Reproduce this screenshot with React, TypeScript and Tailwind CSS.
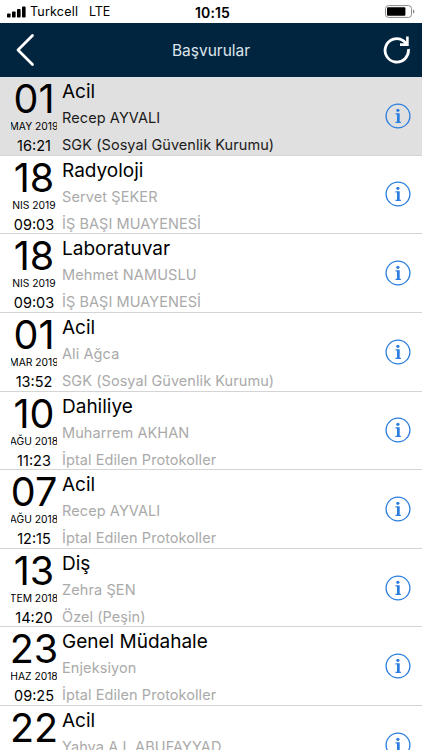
import clsx from "clsx";

interface Application {
  day: string;
  month: string;
  time: string;
  department: string;
  person: string;
  description: string;
  selected?: boolean;
}

const applications: Application[] = [
  {
    day: "01",
    month: "MAY 2019",
    time: "16:21",
    department: "Acil",
    person: "Recep AYVALI",
    description: "SGK (Sosyal Güvenlik Kurumu)",
    selected: true,
  },
  {
    day: "18",
    month: "NIS 2019",
    time: "09:03",
    department: "Radyoloji",
    person: "Servet ŞEKER",
    description: "İŞ BAŞI MUAYENESİ",
  },
  {
    day: "18",
    month: "NIS 2019",
    time: "09:03",
    department: "Laboratuvar",
    person: "Mehmet NAMUSLU",
    description: "İŞ BAŞI MUAYENESİ",
  },
  {
    day: "01",
    month: "MAR 2019",
    time: "13:52",
    department: "Acil",
    person: "Ali Ağca",
    description: "SGK (Sosyal Güvenlik Kurumu)",
  },
  {
    day: "10",
    month: "AĞU 2018",
    time: "11:23",
    department: "Dahiliye",
    person: "Muharrem AKHAN",
    description: "İptal Edilen Protokoller",
  },
  {
    day: "07",
    month: "AĞU 2018",
    time: "12:15",
    department: "Acil",
    person: "Recep AYVALI",
    description: "İptal Edilen Protokoller",
  },
  {
    day: "13",
    month: "TEM 2018",
    time: "14:20",
    department: "Diş",
    person: "Zehra ŞEN",
    description: "Özel (Peşin)",
  },
  {
    day: "23",
    month: "HAZ 2018",
    time: "09:25",
    department: "Genel Müdahale",
    person: "Enjeksiyon",
    description: "İptal Edilen Protokoller",
  },
  {
    day: "22",
    month: "",
    time: "",
    department: "Acil",
    person: "Yahya A.I. ABUFAYYAD",
    description: "",
  },
];

const StatusBar = () => (
  <div className="grid h-[23px] shrink-0 grid-cols-3 items-center px-[7px] pt-0.5 text-black">
    <div className="flex items-center whitespace-nowrap text-[12.5px]">
      <svg
        className="-mt-0.5"
        width="19"
        height="12"
        viewBox="0 0 19 12"
        fill="currentColor"
      >
        <rect x="0" y="7.5" width="3.6" height="4" rx="0.8" />
        <rect x="5" y="5.5" width="3.6" height="6" rx="0.8" />
        <rect x="10" y="3" width="3.6" height="8.5" rx="0.8" />
        <rect x="15" y="0.6" width="3.6" height="10.9" rx="0.8" />
      </svg>
      <span className="ml-1 tracking-[0.2px]">Turkcell</span>
      <span className="ml-[11px] tracking-[-0.2px]">LTE</span>
    </div>
    <div className="pl-[3px] text-center text-[14px] font-semibold tracking-[0.1px]">
      10:15
    </div>
    <svg
      className="-mt-0.5 justify-self-end"
      width="30"
      height="13"
      viewBox="0 0 30 13"
      fill="none"
    >
      <rect x="0.5" y="0.6" width="26" height="11.8" rx="3" stroke="#8a8a8a" />
      <rect x="2" y="2.2" width="18.4" height="8.6" rx="1" fill="#000" />
      <path d="M28 4.5v4c1-.3 1.4-1.1 1.4-2s-.4-1.7-1.4-2z" fill="#8a8a8a" />
    </svg>
  </div>
);

const Header = () => (
  <header className="flex h-[54px] shrink-0 items-center justify-between bg-[#02253f] pl-[15px] pr-[11px] text-white">
    <button aria-label="Geri">
      <svg width="20" height="34" viewBox="0 0 20 34" fill="none">
        <path
          d="M17.5 2.5 3 17l14.5 14.5"
          stroke="currentColor"
          strokeWidth="2.8"
          strokeLinecap="round"
          strokeLinejoin="round"
        />
      </svg>
    </button>
    <h1 className="pl-1 pt-px text-[15.5px] text-[#dde5ec]">Başvurular</h1>
    <button aria-label="Yenile">
      <svg width="28" height="28" viewBox="0 0 28 28" fill="none">
        <path
          d="M25.4 13A11.7 11.7 0 1 1 20.5 4.8L24 8.4"
          stroke="currentColor"
          strokeWidth="2.8"
        />
        <path d="M24.4 0.6v8h-7.4" stroke="currentColor" strokeWidth="2.6" />
      </svg>
    </button>
  </header>
);

const InfoIcon = () => (
  <svg width="26" height="26" viewBox="0 0 26 26" fill="none">
    <circle cx="13" cy="13" r="11.9" stroke="#2b7de0" strokeWidth="1.3" />
    <circle cx="12.9" cy="7.3" r="1.6" fill="#2b7de0" />
    <path
      d="M10.5 10.2h4.2v8.6h1.2v1.2h-5.4v-1.2h1.5v-7.4h-1.5z"
      fill="#2b7de0"
    />
  </svg>
);

const ApplicationRow = ({ item }: { item: Application }) => (
  <li
    className={clsx(
      "flex h-[78.64px] shrink-0 overflow-hidden border-b border-[#d4d4d4] pl-[11px]",
      item.selected ? "bg-[#e0e0e0]" : "bg-white"
    )}
  >
    <div className="flex w-[46px] shrink-0 flex-col items-center overflow-hidden whitespace-nowrap pt-0.5 text-black">
      <span className="text-[39.5px] leading-[41px]">{item.day}</span>
      <span className="text-[10.3px] leading-3">{item.month}</span>
      <span className="mt-[5px] text-[14.5px] leading-[18px]">
        {item.time}
      </span>
    </div>
    <div className="ml-[5px] flex flex-1 flex-col whitespace-nowrap pt-px">
      <span className="text-[19px] leading-7 text-black">
        {item.department}
      </span>
      <span
        className={clsx(
          "text-[14.5px] leading-6 tracking-[0.1px]",
          item.selected ? "text-[#1a1a1a]" : "text-[#aaaaaa]"
        )}
      >
        {item.person}
      </span>
      <span
        className={clsx(
          "mt-1 text-[14.5px] leading-[21px] tracking-[0.06px]",
          item.selected ? "text-[#1a1a1a]" : "text-[#aaaaaa]"
        )}
      >
        {item.description}
      </span>
    </div>
    <button className="mr-[11px] self-center" aria-label="Bilgi">
      <InfoIcon />
    </button>
  </li>
);

export default function App() {
  return (
    <div className="flex h-screen w-full flex-col overflow-hidden bg-white font-['Inter',sans-serif]">
      <StatusBar />
      <Header />
      <ul className="flex min-h-0 flex-1 flex-col overflow-hidden">
        {applications.map((item, index) => (
          <ApplicationRow key={index} item={item} />
        ))}
      </ul>
    </div>
  );
}
